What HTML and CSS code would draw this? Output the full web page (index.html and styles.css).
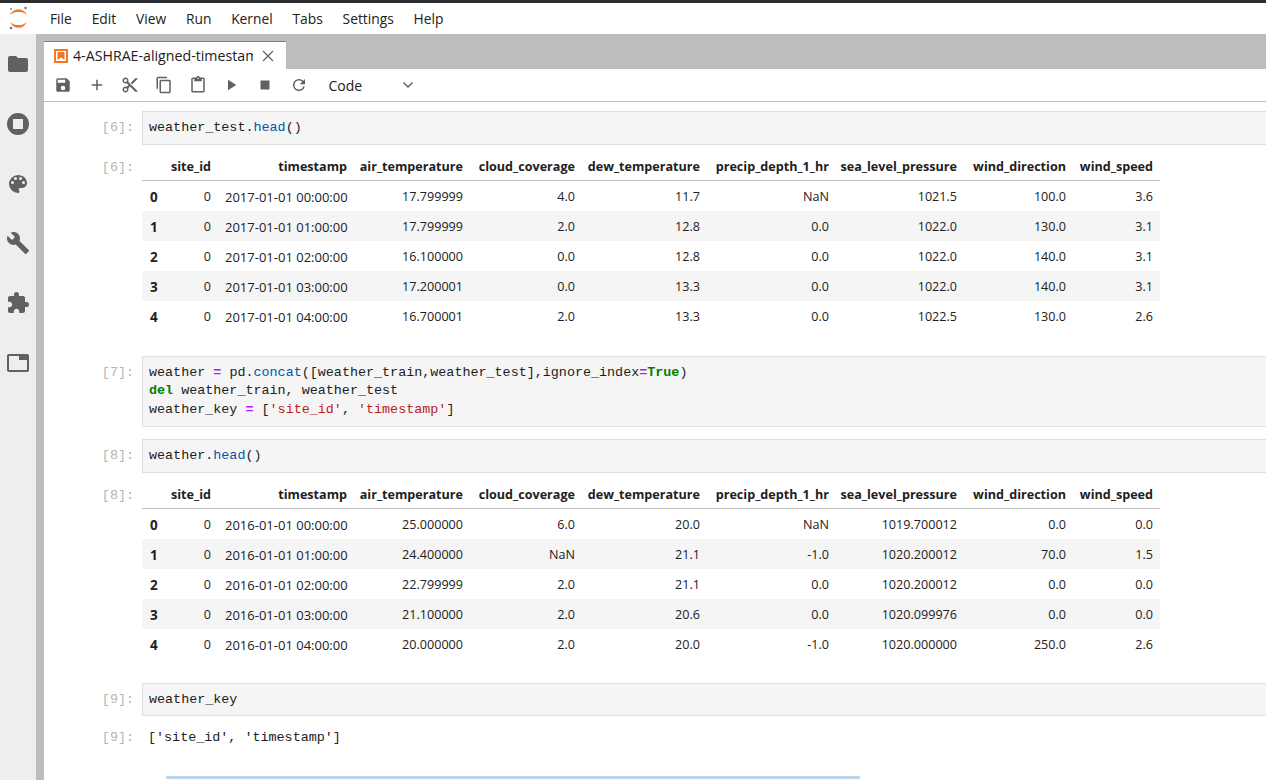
FILE: index.html
```html
<!DOCTYPE html>
<html lang="en">
<head>
<meta charset="utf-8">
<title>4-ASHRAE-aligned-timestamps</title>
<link rel="stylesheet" href="styles.css">
</head>
<body>
<div class="app">
  <header class="menubar">
    <svg class="logo" viewBox="0 0 36 31" width="36" height="31"><path fill="#f37726" d="M10 12C12 8 15 6.500 18.500 6.500S25 8 27 12c-3-2.500-5-3-8.500-3S13 9.500 10 12z"/><path fill="#f37726" d="M10 19c2 4 5 5.800 8.500 5.800S25 23 27 19c-3 2.500-5 3-8.500 3S13 21.500 10 19z"/><circle cx="25.500" cy="5" r="1.200" fill="#767677"/><circle cx="11" cy="6" r=".9" fill="#767677"/><circle cx="11" cy="25" r="1.300" fill="#767677"/></svg>
    <nav class="menu">
      <span>File</span><span>Edit</span><span>View</span><span>Run</span><span>Kernel</span><span>Tabs</span><span>Settings</span><span>Help</span>
    </nav>
  </header>
  <div class="workspace">
    <aside class="sidebar">
      <svg viewBox="0 0 24 24"><path d="M10 4H4c-1.100 0-2 .9-2 2v12c0 1.100.9 2 2 2h16c1.100 0 2-.9 2-2V8c0-1.100-.9-2-2-2h-8l-2-2z"/></svg>
      <svg viewBox="0 0 24 24"><path d="M12 1a11 11 0 1 0 0 22 11 11 0 0 0 0-22zm5 16H7V7h10v10z"/></svg>
      <svg viewBox="0 0 24 24"><path d="M12 3a9 9 0 0 0 0 18c.83 0 1.500-.67 1.500-1.500 0-.39-.15-.74-.39-1.010-.23-.26-.38-.61-.38-.99 0-.83.67-1.500 1.500-1.500H16c2.760 0 5-2.240 5-5 0-4.420-4.030-8-9-8zm-5.500 9a1.500 1.500 0 1 1 0-3 1.500 1.500 0 0 1 0 3zm3-4a1.500 1.500 0 1 1 0-3 1.500 1.500 0 0 1 0 3zm5 0a1.500 1.500 0 1 1 0-3 1.500 1.500 0 0 1 0 3zm3 4a1.500 1.500 0 1 1 0-3 1.500 1.500 0 0 1 0 3z"/></svg>
      <svg viewBox="0 0 24 24"><path d="M22.700 19l-9.100-9.100c.9-2.300.4-5-1.500-6.900-2-2-5-2.400-7.400-1.300L9 6 6 9 1.600 4.700C.4 7.100.9 10.100 2.900 12.100c1.900 1.900 4.600 2.400 6.900 1.500l9.100 9.100c.4.400 1 .4 1.400 0l2.300-2.300c.5-.4.5-1.100.1-1.400z"/></svg>
      <svg viewBox="0 0 24 24"><path d="M20.500 11H19V7c0-1.100-.9-2-2-2h-4V3.500a2.500 2.500 0 0 0-5 0V5H4c-1.100 0-2 .9-2 2v3.800h1.500c1.490 0 2.700 1.210 2.700 2.700s-1.210 2.700-2.700 2.700H2V20c0 1.100.9 2 2 2h3.800v-1.500c0-1.490 1.210-2.700 2.700-2.700s2.700 1.210 2.700 2.700V22H17c1.100 0 2-.9 2-2v-4h1.500a2.500 2.500 0 0 0 0-5z"/></svg>
      <svg viewBox="0 0 24 24"><path d="M21 3H3c-1.100 0-2 .9-2 2v14c0 1.100.9 2 2 2h18c1.100 0 2-.9 2-2V5c0-1.100-.9-2-2-2zm0 16H3V5h10v4h8v10z"/></svg>
    </aside>
    <main class="main">
      <div class="tabbar">
        <div class="tab">
          <svg class="tab-icon" viewBox="0 0 14 14" width="14" height="14"><rect width="14" height="14" fill="#f37726"/><rect x="2" y="2" width="10" height="10" fill="#fff"/><path d="M3.500 3h7v8L7 8.500 3.500 11z" fill="#f37726"/></svg>
          <span class="tab-label">4-ASHRAE-aligned-timestamps</span>
          <svg class="tab-close" viewBox="0 0 12 12" width="12" height="12"><path d="M1 1l10 10M11 1L1 11" stroke="#616161" stroke-width="1.200" fill="none"/></svg>
        </div>
      </div>
      <div class="toolbar">
        <svg class="tool" viewBox="0 0 24 24"><path d="M17 3H5a2 2 0 0 0-2 2v14c0 1.100.9 2 2 2h14c1.100 0 2-.9 2-2V7l-4-4zm-5 16a3 3 0 1 1 0-6 3 3 0 0 1 0 6zm3-10H5V5h10v4z"/></svg>
        <svg class="tool" viewBox="0 0 24 24"><path d="M19 13h-6v6h-2v-6H5v-2h6V5h2v6h6v2z"/></svg>
        <svg class="tool" viewBox="0 0 24 24"><path d="M9.640 7.640c.23-.5.36-1.050.36-1.640 0-2.210-1.790-4-4-4S2 3.790 2 6s1.790 4 4 4c.59 0 1.140-.13 1.640-.36L10 12l-2.360 2.360C7.140 14.130 6.590 14 6 14c-2.210 0-4 1.790-4 4s1.790 4 4 4 4-1.790 4-4c0-.59-.13-1.140-.36-1.640L12 14l7 7h3v-1L9.640 7.640zM6 8a2 2 0 1 1 0-4 2 2 0 0 1 0 4zm0 12a2 2 0 1 1 0-4 2 2 0 0 1 0 4zm6-7.500a.5.5 0 1 1 0-1 .5.500 0 0 1 0 1zM19 3l-6 6 2 2 7-7V3z"/></svg>
        <svg class="tool" viewBox="0 0 24 24"><path d="M16 1H4a2 2 0 0 0-2 2v14h2V3h12V1zm3 4H8a2 2 0 0 0-2 2v14c0 1.100.9 2 2 2h11c1.100 0 2-.9 2-2V7a2 2 0 0 0-2-2zm0 16H8V7h11v14z"/></svg>
        <svg class="tool" viewBox="0 0 24 24"><path d="M19 2h-4.180C14.400.84 13.300 0 12 0s-2.400.84-2.820 2H5a2 2 0 0 0-2 2v16c0 1.100.9 2 2 2h14c1.100 0 2-.9 2-2V4a2 2 0 0 0-2-2zm-7 0c.55 0 1 .45 1 1s-.45 1-1 1-1-.45-1-1 .45-1 1-1zm7 18H5V4h2v3h10V4h2v16z"/></svg>
        <svg class="tool" viewBox="0 0 24 24"><path d="M8 5v14l11-7z"/></svg>
        <svg class="tool" viewBox="0 0 24 24"><path d="M6 6h12v12H6z"/></svg>
        <svg class="tool" viewBox="0 0 24 24"><path d="M17.650 6.350A7.960 7.960 0 0 0 12 4a8 8 0 1 0 7.730 10h-2.080A6 6 0 1 1 12 6c1.660 0 3.140.69 4.220 1.780L13 11h7V4l-2.350 2.350z"/></svg>
        <div class="celltype">
          <span>Code</span>
          <svg viewBox="0 0 12 8" width="12" height="8"><path d="M1.500 1.500L6 6l4.500-4.500" fill="none" stroke="#616161" stroke-width="1.500"/></svg>
        </div>
      </div>
      <div class="notebook">
        <section class="cell cell-six">
          <div class="row">
            <div class="prompt">[6]:</div>
            <pre class="input">weather_test.<span class="fn">head</span>()</pre>
          </div>
          <div class="row out-table">
            <div class="prompt">[6]:</div>
            <table class="df">
              <colgroup><col class="c0"><col class="c1"><col class="c2"><col class="c3"><col class="c4"><col class="c5"><col class="c6"><col class="c7"><col class="c8"><col class="c9"></colgroup>
              <thead><tr><th></th><th>site_id</th><th>timestamp</th><th>air_temperature</th><th>cloud_coverage</th><th>dew_temperature</th><th>precip_depth_1_hr</th><th>sea_level_pressure</th><th>wind_direction</th><th>wind_speed</th></tr></thead>
              <tbody>
                <tr><th>0</th><td>0</td><td>2017-01-01 00:00:00</td><td>17.799999</td><td>4.0</td><td>11.7</td><td>NaN</td><td>1021.5</td><td>100.0</td><td>3.6</td></tr>
                <tr><th>1</th><td>0</td><td>2017-01-01 01:00:00</td><td>17.799999</td><td>2.0</td><td>12.8</td><td>0.0</td><td>1022.0</td><td>130.0</td><td>3.1</td></tr>
                <tr><th>2</th><td>0</td><td>2017-01-01 02:00:00</td><td>16.100000</td><td>0.0</td><td>12.8</td><td>0.0</td><td>1022.0</td><td>140.0</td><td>3.1</td></tr>
                <tr><th>3</th><td>0</td><td>2017-01-01 03:00:00</td><td>17.200001</td><td>0.0</td><td>13.3</td><td>0.0</td><td>1022.0</td><td>140.0</td><td>3.1</td></tr>
                <tr><th>4</th><td>0</td><td>2017-01-01 04:00:00</td><td>16.700001</td><td>2.0</td><td>13.3</td><td>0.0</td><td>1022.5</td><td>130.0</td><td>2.6</td></tr>
              </tbody>
            </table>
          </div>
        </section>
        <section class="cell cell-seven">
          <div class="row">
            <div class="prompt">[7]:</div>
            <pre class="input">weather <span class="op">=</span> pd.<span class="fn">concat</span>([weather_train,weather_test],ignore_index<span class="op">=</span><span class="kw">True</span>)
<span class="kw">del</span> weather_train, weather_test
weather_key <span class="op">=</span> [<span class="str">'site_id'</span>, <span class="str">'timestamp'</span>]</pre>
          </div>
        </section>
        <section class="cell cell-eight">
          <div class="row">
            <div class="prompt">[8]:</div>
            <pre class="input">weather.<span class="fn">head</span>()</pre>
          </div>
          <div class="row out-table">
            <div class="prompt">[8]:</div>
            <table class="df">
              <colgroup><col class="c0"><col class="c1"><col class="c2"><col class="c3"><col class="c4"><col class="c5"><col class="c6"><col class="c7"><col class="c8"><col class="c9"></colgroup>
              <thead><tr><th></th><th>site_id</th><th>timestamp</th><th>air_temperature</th><th>cloud_coverage</th><th>dew_temperature</th><th>precip_depth_1_hr</th><th>sea_level_pressure</th><th>wind_direction</th><th>wind_speed</th></tr></thead>
              <tbody>
                <tr><th>0</th><td>0</td><td>2016-01-01 00:00:00</td><td>25.000000</td><td>6.0</td><td>20.0</td><td>NaN</td><td>1019.700012</td><td>0.0</td><td>0.0</td></tr>
                <tr><th>1</th><td>0</td><td>2016-01-01 01:00:00</td><td>24.400000</td><td>NaN</td><td>21.1</td><td>-1.0</td><td>1020.200012</td><td>70.0</td><td>1.5</td></tr>
                <tr><th>2</th><td>0</td><td>2016-01-01 02:00:00</td><td>22.799999</td><td>2.0</td><td>21.1</td><td>0.0</td><td>1020.200012</td><td>0.0</td><td>0.0</td></tr>
                <tr><th>3</th><td>0</td><td>2016-01-01 03:00:00</td><td>21.100000</td><td>2.0</td><td>20.6</td><td>0.0</td><td>1020.099976</td><td>0.0</td><td>0.0</td></tr>
                <tr><th>4</th><td>0</td><td>2016-01-01 04:00:00</td><td>20.000000</td><td>2.0</td><td>20.0</td><td>-1.0</td><td>1020.000000</td><td>250.0</td><td>2.6</td></tr>
              </tbody>
            </table>
          </div>
        </section>
        <section class="cell cell-nine">
          <div class="row">
            <div class="prompt">[9]:</div>
            <pre class="input">weather_key</pre>
          </div>
          <div class="row out-text">
            <div class="prompt">[9]:</div>
            <pre class="output">['site_id', 'timestamp']</pre>
          </div>
        </section>
        <div class="next-output"></div>
      </div>
    </main>
  </div>
</div>
</body>
</html>
```
FILE: styles.css
```css
* { box-sizing: border-box; }
html, body { margin: 0; height: 100%; overflow: hidden; background: #fff; }
body { font-family: "Open Sans", "Noto Sans", sans-serif; color: #212121; }
.app { height: 780px; display: flex; flex-direction: column; border-top: 3px solid #2b2d30; }

.menubar { height: 31px; flex: none; display: flex; align-items: center; background: #fff; }
.logo { width: 36px; flex: none; }
.menu { display: flex; padding-left: 14px; font-size: 13.800px; color: #212121; }
.menu span { margin-right: 19.800px; line-height: 31px; }

.workspace { flex: 1; display: flex; min-height: 0; }
.sidebar { width: 36px; flex: none; background: #eeeeee; display: flex; flex-direction: column; align-items: center; padding-top: 18px; gap: 35.800px; }
.sidebar svg { width: 24px; height: 24px; fill: #616161; flex: none; }

.main { flex: 1; min-width: 0; display: flex; flex-direction: column; border-left: 8px solid #bdbdbd; }
.tabbar { height: 35px; flex: none; background: #bdbdbd; padding-top: 7px; }
.tab { width: 242px; height: 28px; background: #fff; border-top: 1px solid #2196f3; display: flex; align-items: center; padding-left: 10px; }
.tab-icon { flex: none; }
.tab-label { width: 180px; margin-left: 5px; overflow: hidden; white-space: nowrap; font-size: 14.200px; color: #212121; }
.tab-close { margin-left: 9px; flex: none; }

.toolbar { height: 33px; flex: none; background: #fff; border-bottom: 1px solid #bdbdbd; display: flex; align-items: center; padding-left: 8px; }
.tool { width: 22px; height: 18px; margin-right: 11.700px; fill: #616161; flex: none; }
.celltype { display: flex; align-items: center; margin-left: 7px; font-size: 14px; color: #212121; }
.celltype span { width: 28px; }
.celltype svg { margin-left: 45px; }

.notebook { flex: 1; min-height: 0; overflow: hidden; padding-top: 9px; background: #fff; }
.row { display: flex; align-items: flex-start; }
.prompt { width: 90px; flex: none; margin-right: 8px; text-align: right; font: 13.400px/17px "Liberation Mono", monospace; color: #b5b5b5; padding-top: 8px; }
.input { flex: 1; min-width: 0; margin: 0; padding: 7px 6px 6px; background: #f5f5f5; border: 1px solid #e0e0e0; border-right: 0; font: 13.400px/18.700px "Liberation Mono", monospace; color: #212121; overflow: hidden; }
.output { margin: 0; padding: 8px 6px; font: 13.400px/18.700px "Liberation Mono", monospace; color: #212121; }
.fn { color: #0055aa; }
.op { color: #aa22ff; font-weight: bold; }
.kw { color: #008000; font-weight: bold; }
.str { color: #ba2121; }

.out-table { margin-top: 7px; }
.out-table .prompt { padding-top: 7px; }
.df { border-collapse: collapse; table-layout: fixed; width: 1018px; font-size: 12.600px; line-height: 16px; color: #212121; }
.c0 { width: 22px; } .c1 { width: 54px; } .c2 { width: 136px; } .c3 { width: 116px; } .c4 { width: 112px; }
.c5 { width: 125px; } .c6 { width: 129px; } .c7 { width: 128px; } .c8 { width: 109px; } .c9 { width: 87px; }
.df th, .df td { padding: 3px 7px 0; height: 30px; text-align: right; white-space: nowrap; }
.df td:nth-child(3) { font-size: 13px; }
.df thead th { font-weight: 700; height: 29px; padding: 2px 7px 0 0; border-bottom: 1px solid #bdbdbd; }
.df tbody th { font-size: 13.500px; font-weight: 700; padding: 3px 0 0 8px; text-align: left; }
.df tbody tr:nth-child(even) { background: #f5f5f5; }

.cell-seven { margin-top: 25px; }
.cell-eight { margin-top: 12px; }
.cell-nine { margin-top: 24px; }
.out-text { margin-top: 5px; }
.next-output { height: 3px; width: 694px; margin: 20px 0 0 122px; background: #bfd4e8; }
```
